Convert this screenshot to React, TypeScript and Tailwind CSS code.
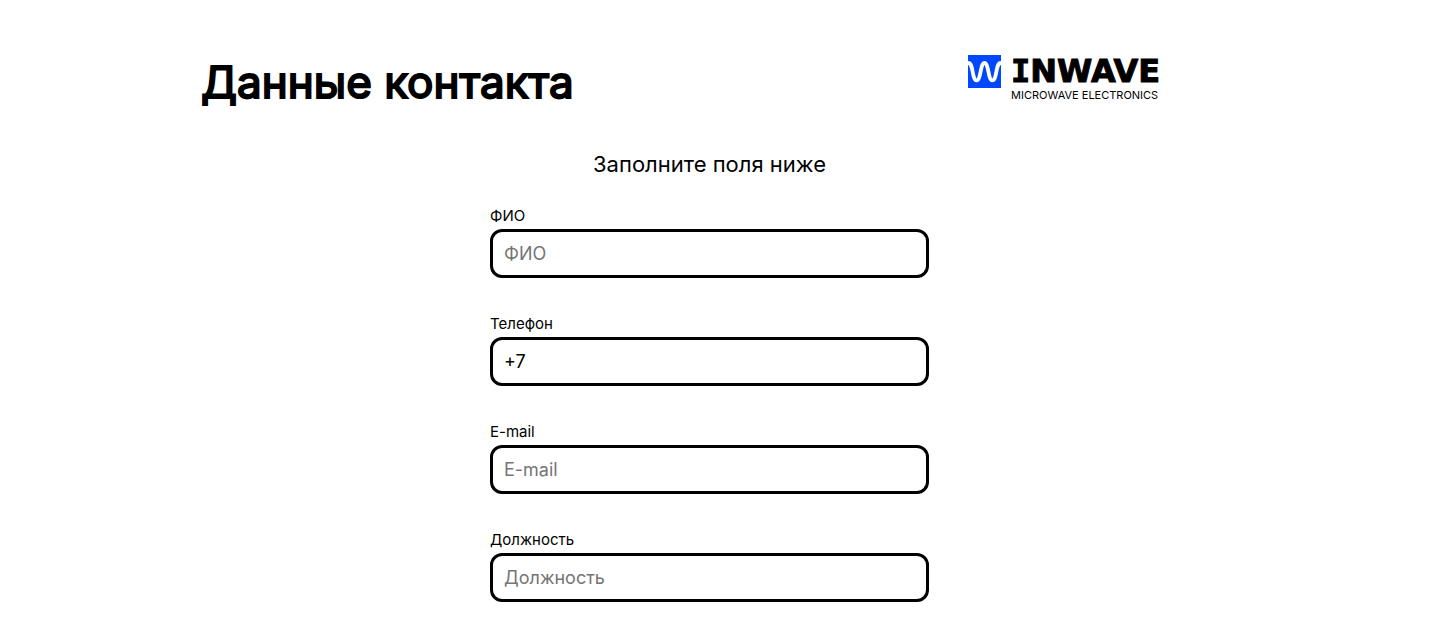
type Field = {
  id: string;
  label: string;
  type: string;
  placeholder?: string;
  value?: string;
};

const fields: Field[] = [
  { id: "name", label: "ФИО", type: "text", placeholder: "ФИО" },
  { id: "phone", label: "Телефон", type: "tel", value: "+7" },
  { id: "email", label: "E-mail", type: "email", placeholder: "E-mail" },
  { id: "position", label: "Должность", type: "text", placeholder: "Должность" },
];

function Logo() {
  return (
    <div className="flex w-60 shrink-0 items-start gap-2.5">
      <svg className="h-[33px] w-[33px] shrink-0" viewBox="0 0 33 33" aria-hidden="true">
        <rect width="33" height="33" fill="#0048ff" />
        <path
          d="M0 8C2.6 8 3.2 10 4.1 14.2C5.4 20 5.8 25.3 8.7 25.3C13 25.3 12.2 8 16.5 8C20.8 8 20 25.3 24.3 25.3C27.2 25.3 27.6 20 28.9 14.2C29.8 10 30.4 8 33 8"
          fill="none"
          stroke="#fff"
          strokeWidth="3.8"
        />
      </svg>
      <div className="whitespace-nowrap text-black">
        <div className="font-['DejaVu_Sans',sans-serif] text-[32px] leading-[33px] font-bold [-webkit-text-stroke:1px_black]">
          <span className="font-['DejaVu_Sans_Mono',monospace]">I</span>NWAVE
        </div>
        <div className="text-[11px] leading-[14px]">MICROWAVE ELECTRONICS</div>
      </div>
    </div>
  );
}

function FormField({ id, label, type, placeholder, value }: Field) {
  return (
    <div className="flex flex-col gap-[3px]">
      <label htmlFor={id} className="text-[15px] leading-5">
        {label}
      </label>
      <input
        id={id}
        name={id}
        type={type}
        placeholder={placeholder}
        defaultValue={value}
        className="h-[49px] w-full rounded-xl border-3 border-black bg-white px-[11px] text-lg text-black outline-none placeholder:text-[#757575]"
      />
    </div>
  );
}

export default function App() {
  return (
    <main className="bg-white pr-[18px] pb-6 font-['Inter',sans-serif] text-black">
      <header className="mx-auto flex max-w-[1017px] items-start justify-between pt-[55px] pr-2.5">
        <h1 className="text-[44px] leading-[54px] font-normal [-webkit-text-stroke:2px_black]">
          Данные контакта
        </h1>
        <Logo />
      </header>
      <form className="mx-auto mt-[39px] flex max-w-[439px] flex-col">
        <h2 className="text-center text-[22px] leading-8">Заполните поля ниже</h2>
        <div className="mt-[26px] flex flex-col gap-9">
          {fields.map((field) => (
            <FormField key={field.id} {...field} />
          ))}
        </div>
      </form>
    </main>
  );
}
